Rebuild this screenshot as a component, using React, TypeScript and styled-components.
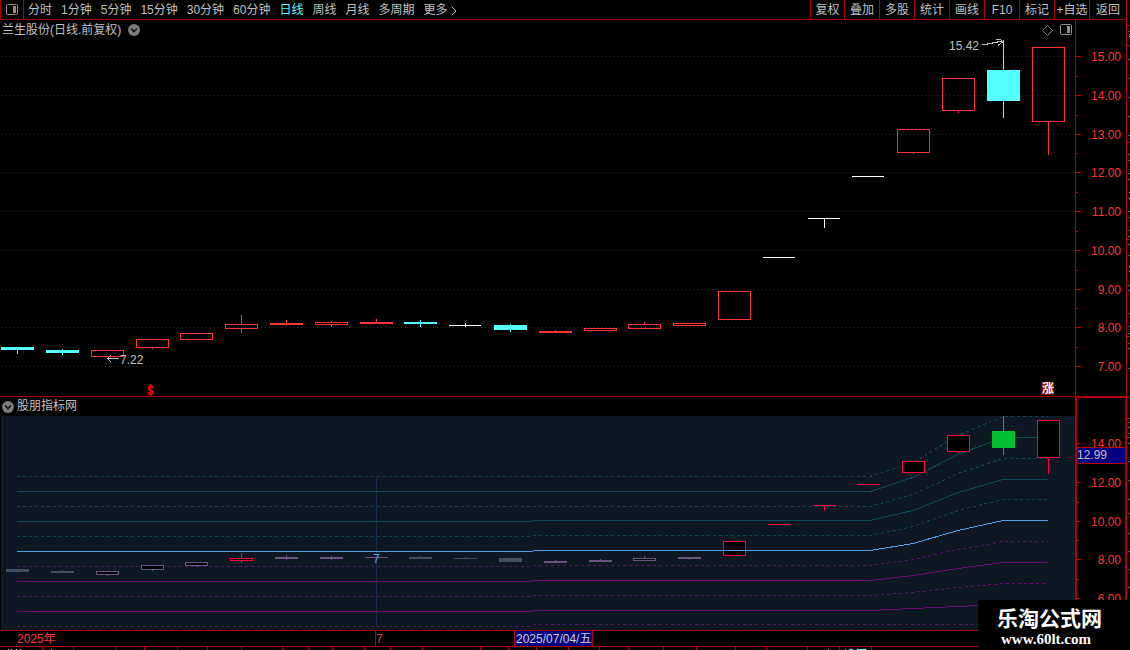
import React from 'react';
import styled, { createGlobalStyle } from 'styled-components';

const C = {
  line: '#b00000',
  up: '#ff3232',
  down: '#54ffff',
  flat: '#ffffff',
  text: '#c0c0c0',
  axis: '#ff3232',
  navy: '#000080',
  teal: '#0a4c5a',
  purple: '#690a76',
  blue: '#50a0f0',
  hot: '#ff0040',
  slate: '#405060',
  mauve: '#6b5585',
  green: '#00c030',
};

const Global = createGlobalStyle`
  * { box-sizing: border-box; }
  body {
    margin: 0;
    background: #000;
    color: ${C.text};
    font: 12px/19px "Liberation Sans", "Noto Sans CJK SC", sans-serif;
  }
  svg text { font-family: "Liberation Sans", "Noto Sans CJK SC", sans-serif; font-size: 12px; }
`;

const Page = styled.div`
  position: relative;
  display: flex;
  min-height: 100vh;
  overflow: hidden;
`;

const Main = styled.main`
  flex: 1;
  min-width: 0;
  border-right: 1px solid ${C.line};
`;

const Edge = styled.aside`
  width: 3px;
`;

const Drawing = styled.svg`
  display: block;
  width: 100%;
  height: ${(p: { $h: number }) => p.$h}px;
  overflow: visible;
  shape-rendering: crispEdges;
`;

const Toolbar = styled.header`
  display: flex;
  justify-content: space-between;
  height: 20px;
  border-bottom: 1px solid ${C.line};
  white-space: nowrap;
`;

const Periods = styled.nav`
  display: flex;
  gap: 9px;
`;

const Button = styled.button`
  display: flex;
  align-items: center;
  justify-content: center;
  padding: 0;
  border: 0;
  background: none;
  color: ${C.text};
  font: inherit;
  cursor: pointer;
`;

const LayoutButton = styled(Button)`
  width: 24px;
  margin-right: -5px;
  border: solid ${C.line};
  border-width: 0 1px;
`;

const TextButton = styled(Button)`
  padding-top: 2px;
  line-height: 17px;
  color: ${(p: { $active?: boolean }) => (p.$active ? C.down : C.text)};
`;

const MoreButton = styled(TextButton)`
  gap: 3px;
`;

const Tools = styled.nav`
  display: grid;
  grid-template-columns: 34px repeat(7, 35px) 1fr;
  width: 316px;
`;

const ToolButton = styled(TextButton)`
  border-left: 1px solid ${C.line};
`;

const Panel = styled.section`
  display: flex;
`;

const MainPanel = styled(Panel)`
  border-bottom: 1px solid ${C.line};
`;

const Plot = styled.div`
  flex: 1;
  min-width: 0;
`;

const PlotHead = styled.div`
  display: flex;
  align-items: center;
  justify-content: space-between;
  height: ${(p: { $h: number }) => p.$h}px;
  padding: 0 3px 0 2px;
`;

const HeadGroup = styled.div`
  display: flex;
  align-items: center;
  gap: ${(p: { $gap: number }) => p.$gap}px;
`;

const Title = styled.h2`
  margin: 0;
  font-size: 12px;
  font-weight: 400;
`;

const SubPlotArea = styled.div`
  margin-left: 1px;
  background: #0d1822;
`;

const Axis = styled.div`
  width: 51px;
  border-left: 1px solid ${C.line};
`;

const SubAxis = styled.div`
  width: 51px;
  border: solid ${C.line};
  border-width: 1px 1px 0 2px;
`;

const TimeAxis = styled.div`
  display: flex;
  height: 17px;
  border: solid ${C.line};
  border-width: 1px 0;
  line-height: 16px;
  color: ${C.axis};
`;

const Period = styled.div`
  width: 376px;
  padding-left: 17px;
  border-right: 1px solid ${C.line};
`;

const MonthMark = styled.div`
  width: 138px;
`;

const DateTag = styled.time`
  width: 79px;
  padding-left: 1px;
  border: solid ${C.line};
  border-width: 0 1px;
  background: ${C.navy};
  color: #d0d0d0;
  white-space: nowrap;
`;

const Watermark = styled.footer`
  position: absolute;
  right: 0;
  bottom: 0;
  width: 152px;
  height: 50px;
  padding: 7px 0 0 19px;
  background: #000;
  color: #fff;
  font-weight: 700;
`;

const SiteName = styled.div`
  font-size: 21px;
  line-height: 24px;
`;

const SiteLink = styled.a`
  display: block;
  padding-left: 4px;
  color: #fff;
  font: 700 15px/17px "Liberation Serif", serif;
  text-decoration: none;
`;

type Candle = {
  x: number;
  top: number;
  h: number;
  color: string;
  hollow?: boolean;
  wick?: [number, number, number];
};

const c = (
  x: number,
  top: number,
  bottom: number,
  color: string,
  hollow = false,
  wick?: [number, number, number],
): Candle => ({ x, top, h: bottom - top, color, hollow, wick });

const mainCandles: Candle[] = [
  c(1, 347, 350, C.down, false, [17, 347, 354]),
  c(46, 350, 353, C.down, false, [62, 349, 355]),
  c(91, 350, 357, C.up, true),
  c(136, 339, 348, C.up, true, [152, 348, 349]),
  c(180, 333, 340, C.up, true),
  c(225, 324, 329, C.up, true, [241, 315, 333]),
  c(270, 323, 325, C.up, false, [286, 320, 326]),
  c(315, 322, 325, C.up, true, [331, 321, 327]),
  c(360, 322, 324, C.up, false, [376, 319, 324]),
  c(404, 322, 324, C.down, false, [420, 320, 327]),
  c(449, 325, 326, C.flat, false, [465, 323, 327]),
  c(494, 325, 330, C.down, false, [510, 324, 332]),
  c(539, 331, 333, C.up, false, [555, 330, 333]),
  c(584, 328, 331, C.up, true),
  c(628, 324, 329, C.up, true, [644, 322, 324]),
  c(673, 323, 326, C.up, true),
  c(718, 291, 320, C.up, true),
  c(763, 257, 258, C.flat),
  c(808, 218, 219, C.flat, false, [824, 218, 228]),
  c(852, 176, 177, C.flat),
  c(897, 129, 153, C.up, true, [913, 153, 154]),
  c(942, 78, 111, C.up, true, [958, 111, 113]),
  c(987, 70, 101, C.down, false, [1003, 40, 118]),
  c(1032, 47, 122, C.up, true, [1048, 122, 155]),
];

const subCandles: Candle[] = [
  c(6, 569, 572, C.slate, false, [17, 569, 573]),
  c(51, 571, 573, C.slate, false, [62, 570, 573]),
  c(96, 571, 575, C.mauve, true, [107, 575, 576]),
  c(141, 565, 570, C.mauve, true, [152, 570, 571]),
  c(185, 562, 566, C.mauve, true, [196, 566, 567]),
  c(230, 558, 561, C.hot, true, [241, 553, 563]),
  c(275, 557, 559, C.mauve, false, [286, 555, 560]),
  c(320, 557, 559, C.mauve, false, [331, 556, 560]),
  c(365, 557, 558, C.mauve),
  c(409, 557, 559, C.slate, false, [420, 556, 559]),
  c(454, 558, 559, C.slate, false, [465, 557, 559]),
  c(499, 558, 562, C.slate),
  c(544, 561, 563, C.mauve, false, [555, 560, 563]),
  c(589, 560, 562, C.mauve, false, [600, 559, 562]),
  c(633, 558, 561, C.mauve, true, [644, 556, 558]),
  c(678, 557, 559, C.mauve, false, [689, 557, 560]),
  c(723, 541, 556, C.hot, true),
  c(768, 524, 525, C.hot),
  c(813, 505, 506, C.hot, false, [824, 505, 511]),
  c(857, 484, 485, C.hot),
  c(902, 461, 473, C.hot, true, [913, 473, 474]),
  c(947, 435, 452, C.hot, true, [958, 452, 453]),
  c(992, 431, 448, C.green, false, [1003, 416, 455]),
  c(1037, 420, 458, C.hot, true, [1048, 458, 474]),
];

function Candles({ data, width, fill }: { data: Candle[]; width: number; fill: string }) {
  return (
    <g>
      {data.map((k) => {
        const w = k.color === C.flat ? width - 1 : width;
        const bottom = k.top + k.h;
        const [wx, from, to] = k.wick ?? [0, 0, 0];
        return (
          <g key={k.x} fill={k.color}>
            {k.wick && !k.hollow && <rect x={wx} y={from} width={1} height={to - from} />}
            {k.wick && k.hollow && from < k.top && <rect x={wx} y={from} width={1} height={k.top - from} />}
            {k.wick && k.hollow && to > bottom && <rect x={wx} y={bottom} width={1} height={to - bottom} />}
            {k.hollow ? (
              <rect x={k.x + 0.5} y={k.top + 0.5} width={w - 1} height={k.h - 1} fill={fill} stroke={k.color} />
            ) : (
              <rect x={k.x} y={k.top} width={w} height={k.h} />
            )}
          </g>
        );
      })}
    </g>
  );
}

const mainScale: [number, string][] = [
  [56, '15.00'],
  [95, '14.00'],
  [134, '13.00'],
  [172, '12.00'],
  [211, '11.00'],
  [250, '10.00'],
  [289, '9.00'],
  [327, '8.00'],
  [366, '7.00'],
];
const mainMinor = [76, 115, 153, 192, 231, 270, 308, 347];

const subScale: [number, string][] = [
  [443, '14.00'],
  [482, '12.00'],
  [521, '10.00'],
  [559, '8.00'],
  [598, '6.00'],
];
const subMinor = [502, 540, 579];

// Level before and after the step at x=533, then the levels at the last turning points.
type Band = { color: string; dashed: boolean; ys: number[] };
const bands: Band[] = [
  { color: C.teal, dashed: true, ys: [476, 476, 462, 435, 416] },
  { color: C.teal, dashed: false, ys: [491, 491, 477, 454, 437] },
  { color: C.teal, dashed: true, ys: [506, 506, 494, 473, 458] },
  { color: C.teal, dashed: false, ys: [521, 520, 510, 492, 479] },
  { color: C.teal, dashed: true, ys: [536, 535, 526, 510, 499] },
  { color: C.purple, dashed: true, ys: [566, 565, 559, 549, 541] },
  { color: C.purple, dashed: false, ys: [581, 580, 575, 568, 562] },
  { color: C.purple, dashed: true, ys: [596, 595, 592, 587, 583] },
  { color: C.purple, dashed: false, ys: [611, 610, 608, 606, 604] },
  { color: C.purple, dashed: true, ys: [626, 624, 624, 624, 624] },
];
const middle: Band = { color: C.blue, dashed: false, ys: [551, 550, 543, 530, 520] };

function BandLine({ band }: { band: Band }) {
  const [a, b, p, q, r] = band.ys.map((y) => y + 0.5);
  return (
    <path
      d={`M17 ${a}H533M533 ${b}H870L913 ${p}L958 ${q}L1003 ${r}H1048`}
      fill="none"
      stroke={band.color}
      strokeDasharray={band.dashed ? '3 3' : undefined}
    />
  );
}

function Scale({ marks, minor, x }: { marks: [number, string][]; minor: number[]; x: number }) {
  return (
    <g>
      {marks.map(([y, label]) => (
        <g key={label}>
          <rect x={x} y={y} width={1081 - x} height={1} fill={C.line} />
          <text x={1121} y={y + 5} textAnchor="end" fill={C.axis}>
            {label}
          </text>
        </g>
      ))}
      {minor.map((y) => (
        <rect key={y} x={x} y={y} width={2} height={1} fill={C.line} />
      ))}
    </g>
  );
}

const PanelIcon = () => (
  <svg width="12" height="12" viewBox="0 0 12 12" aria-hidden="true">
    <rect x="0.5" y="0.5" width="11" height="10" rx="1" fill="none" stroke="#909090" />
    <rect x="7" y="2" width="3" height="7" fill="#909090" />
  </svg>
);

const DropIcon = () => (
  <svg width="12" height="12" viewBox="0 0 12 12" aria-hidden="true">
    <circle cx="6" cy="6" r="6" fill="#7c7c7c" />
    <path d="M3 4.5L6 7.5L9 4.5" fill="none" stroke="#101010" strokeWidth="1.6" />
  </svg>
);

const DiamondIcon = () => (
  <svg width="11" height="11" viewBox="0 0 11 11" aria-hidden="true">
    <path d="M5.5 0.5L10.5 5.5L5.5 10.5L0.5 5.5Z" fill="none" stroke="#808080" />
  </svg>
);

const ChevronIcon = () => (
  <svg width="6" height="10" viewBox="0 0 6 10" aria-hidden="true">
    <path d="M0.7 0.7L5 5L0.7 9.3" fill="none" stroke={C.text} />
  </svg>
);

const periods = ['分时', '1分钟', '5分钟', '15分钟', '30分钟', '60分钟', '日线', '周线', '月线', '多周期'];
const tools = ['复权', '叠加', '多股', '统计', '画线', 'F10', '标记', '+自选', '返回'];

const edgeLines = [25, 45, 142, 239, 336, 397, 418, 437];
const edgeDots = [
  31, 34, 36, 59, 78, 97, 116, 135, 154, 160, 173, 179, 192, 198, 211, 217, 230, 236, 244, 255, 266, 271, 285, 290,
  313, 326, 333, 343, 348, 368, 422, 427, 433, 443, 461, 480, 499, 513, 533, 551, 569, 587,
];
const footTicks = [
  42, 73, 115, 144, 177, 207, 241, 282, 308, 332, 364, 390, 422, 480, 508, 536, 568, 599, 628, 663, 696, 735, 766, 807,
  839, 871,
];

export default function App() {
  return (
    <>
      <Global />
      <Page>
        <Main>
          <Toolbar>
            <Periods aria-label="周期">
              <LayoutButton aria-label="布局">
                <PanelIcon />
              </LayoutButton>
              {periods.map((p) => (
                <TextButton key={p} $active={p === '日线'}>
                  {p}
                </TextButton>
              ))}
              <MoreButton>
                更多
                <ChevronIcon />
              </MoreButton>
            </Periods>
            <Tools aria-label="工具">
              {tools.map((t) => (
                <ToolButton key={t}>{t}</ToolButton>
              ))}
            </Tools>
          </Toolbar>

          <MainPanel>
            <Plot>
              <PlotHead $h={20}>
                <HeadGroup $gap={7}>
                  <Title>兰生股份(日线.前复权)</Title>
                  <Button aria-label="股票菜单">
                    <DropIcon />
                  </Button>
                </HeadGroup>
                <HeadGroup $gap={7}>
                  <Button aria-label="标注">
                    <DiamondIcon />
                  </Button>
                  <Button aria-label="侧栏">
                    <PanelIcon />
                  </Button>
                </HeadGroup>
              </PlotHead>
              <Drawing $h={356} viewBox="0 40 1075 356" preserveAspectRatio="xMaxYMin meet">
                {mainScale.map(([y]) => (
                  <line key={y} x1={1} x2={1075} y1={y + 0.5} y2={y + 0.5} stroke="#a00000" strokeDasharray="1 3" />
                ))}
                <Candles data={mainCandles} width={33} fill="none" />
                <g fill="none" stroke={C.text}>
                  <path d="M982 44.5H987V43.5H992V42.5H997V41.5H1003M996 39.5H1000L1003 41.5L998 45.5" />
                  <path d="M119 358.5H107M111 355L107.5 358.5L111 362" />
                </g>
                <text x={949} y={50} fill={C.text}>
                  15.42
                </text>
                <text x={120} y={364} fill={C.text}>
                  7.22
                </text>
                <path d="M148 386.5H153M149 385.5H152M150 384.5H151" stroke="#ff0000" />
                <text x={147} y={395} fill="#ff0000" fontWeight={700}>
                  $
                </text>
                <rect x={1041} y={382} width={13} height={13} fill="#800000" />
                <text x={1042} y={393} fill="#fff" fontWeight={700}>
                  涨
                </text>
              </Drawing>
            </Plot>
            <Axis>
              <Drawing $h={376} viewBox="1076 20 50 376">
                <Scale marks={mainScale} minor={mainMinor} x={1076} />
              </Drawing>
            </Axis>
          </MainPanel>

          <Panel>
            <Plot>
              <PlotHead $h={19}>
                <HeadGroup $gap={3}>
                  <Button aria-label="指标菜单">
                    <DropIcon />
                  </Button>
                  <Title>股朋指标网</Title>
                </HeadGroup>
              </PlotHead>
              <SubPlotArea>
                <Drawing $h={214} viewBox="1 416 1074 214" preserveAspectRatio="xMaxYMin meet">
                  <rect x={376} y={477} width={1} height={149} fill="#18304a" />
                  {bands.map((b) => (
                    <BandLine key={b.ys[0]} band={b} />
                  ))}
                  <Candles data={subCandles} width={23} fill="#000" />
                  <BandLine band={middle} />
                  <text x={373} y={563} fill={C.blue}>
                    7
                  </text>
                </Drawing>
              </SubPlotArea>
            </Plot>
            <SubAxis>
              <Drawing $h={232} viewBox="1077 398 48 232">
                <Scale marks={subScale} minor={subMinor} x={1077} />
                <rect x={1077} y={447} width={48} height={17} fill={C.line} />
                <rect x={1077} y={448} width={48} height={15} fill={C.navy} />
                <text x={1077} y={459} fill={C.text}>
                  12.99
                </text>
              </Drawing>
            </SubAxis>
          </Panel>

          <TimeAxis>
            <Period>2025年</Period>
            <MonthMark>7</MonthMark>
            <DateTag dateTime="2025-07-04">2025/07/04/五</DateTag>
          </TimeAxis>
          <Drawing $h={3} viewBox="0 647 1126 3" preserveAspectRatio="xMinYMin meet">
            {footTicks.map((x) => (
              <rect key={x} x={x} y={647} width={1} height={3} fill={C.line} />
            ))}
            {[8, 11, 16, 20, 51, 828, 845].map((x) => (
              <rect key={x} x={x} y={649} width={1} height={1} fill={C.text} />
            ))}
            <rect x={849} y={649} width={4} height={1} fill={C.down} />
            <rect x={857} y={649} width={9} height={1} fill={C.down} />
          </Drawing>
        </Main>
        <Edge>
          <Drawing $h={650} viewBox="0 0 3 650">
            {edgeLines.map((y) => (
              <rect key={y} x={0} y={y} width={3} height={1} fill={C.line} />
            ))}
            {edgeDots.map((y) => (
              <rect key={y} x={2} y={y} width={1} height={1} fill={C.text} />
            ))}
          </Drawing>
        </Edge>
        <Watermark>
          <SiteName>乐淘公式网</SiteName>
          <SiteLink href="#">www.60lt.com</SiteLink>
        </Watermark>
      </Page>
    </>
  );
}
